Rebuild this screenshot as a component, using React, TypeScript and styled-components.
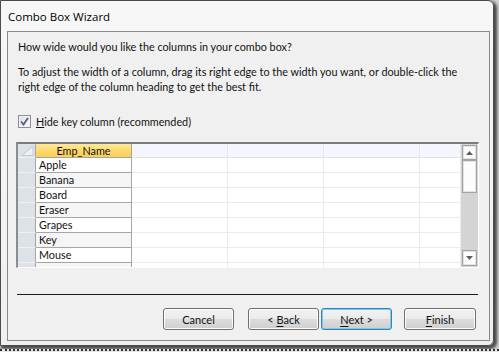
import React from "react";
import styled, { createGlobalStyle } from "styled-components";

const GlobalStyle = createGlobalStyle`
  html, body {
    margin: 0;
    padding: 0;
  }
  body {
    width: 499px;
    height: 352px;
    overflow: hidden;
    background: #cfcfcf;
    font-family: Lato, "Open Sans", sans-serif;
    font-size: 10.8px;
    color: #111;
  }
`;

const items = ["Apple", "Banana", "Board", "Eraser", "Grapes", "Key", "Mouse"];

const Screen = styled.div`
  width: 499px;
  height: 352px;
  display: flex;
  flex-direction: column;
`;

const Window = styled.div`
  width: 492px;
  height: 344px;
  border: 1px solid #4b4b4b;
  border-radius: 0 6px 6px 0;
  background: linear-gradient(to bottom, #f7f7f7 0%, #efefef 100%);
  box-shadow: 2px 2px 3px 1px rgba(0, 0, 0, 0.65);
  display: flex;
  flex-direction: column;
`;

const TitleBar = styled.div`
  height: 30px;
  display: flex;
  align-items: center;
  padding-left: 7px;
  font-family: "Open Sans", sans-serif;
  font-size: 11.5px;
  color: #000;
`;

const Client = styled.div`
  flex: 1;
  margin: 0 3px 4px 6px;
  border: 1px solid #8a8a8a;
  background: #f0f0f0;
  display: flex;
  flex-direction: column;
`;

const Prompt = styled.p`
  margin: ${(p: { top: number }) => p.top}px 0 0 10px;
  line-height: 15px;
  white-space: nowrap;
`;

const CheckRow = styled.label`
  margin: 20px 0 0 10px;
  height: 15px;
  display: flex;
  align-items: center;
  gap: 5px;
`;

const CheckBox = styled.span`
  width: 11px;
  height: 11px;
  border: 1px solid #8e8f8f;
  background: linear-gradient(135deg, #dcdcdc 0%, #fbfbfb 100%);
  box-shadow: inset 0 0 0 1px #f4f4f4;
  display: flex;
  align-items: center;
  justify-content: center;
`;

const Grid = styled.div`
  margin: 13px 0 0 8px;
  width: 460px;
  height: 123px;
  border-top: 2px solid #7c7c7c;
  border-left: 2px solid #8c8c8c;
  border-right: 1px solid #ffffff;
  border-bottom: 1px solid #ffffff;
  display: flex;
  background: #fff;
`;

const Sheet = styled.div`
  flex: 1;
  overflow: hidden;
  display: grid;
  grid-template-columns: 18px 96px 96px 96px 96px 1fr;
  grid-auto-rows: 15px;
  grid-template-rows: 14px;
`;

const Selector = styled.div`
  background: #dde1e8;
  border-bottom: 1px solid #eef0f4;
  border-right: 1px solid #a5a5a5;
`;

const NameHead = styled.div`
  background: linear-gradient(to bottom, #fde99c 0%, #fcd766 60%, #f9cf55 100%);
  border-right: 1px solid #a5a5a5;
  border-bottom: 1px solid #a5a5a5;
  display: flex;
  align-items: center;
  justify-content: center;
  line-height: 13px;
`;

const EmptyHead = styled.div`
  background: #f4f6fd;
  border-right: 1px solid #e6e8ef;
  border-bottom: 1px solid #e2e4ea;
`;

const NameCell = styled.div<{ alt: boolean }>`
  background: ${(p) => (p.alt ? "#f5f5f5" : "#ffffff")};
  border-right: 1px solid #a5a5a5;
  border-bottom: 1px solid #a5a5a5;
  padding-left: 3px;
  line-height: 14px;
  white-space: nowrap;
  overflow: hidden;
`;

const EmptyCell = styled.div`
  border-right: 1px solid #ebebeb;
  border-bottom: 1px solid #ebebeb;
`;

const ScrollBar = styled.div`
  width: 17px;
  background: #d4d4d4;
  display: flex;
  flex-direction: column;
  align-items: center;
  padding: 1px 0;
  box-sizing: border-box;
`;

const ScrollButton = styled.div<{ h: number }>`
  width: 15px;
  height: ${(p) => p.h}px;
  box-sizing: border-box;
  background: #fcfcfc;
  border: 1px solid #a3a3a3;
  box-shadow: inset 0 0 0 1px #e2e2e2;
  display: flex;
  align-items: center;
  justify-content: center;
`;

const Track = styled.div`
  flex: 1;
`;

const Separator = styled.div`
  margin: 26px 0 0 9px;
  width: 461px;
  height: 1px;
  background: #1c1c1c;
`;

const ButtonRow = styled.div`
  margin-top: 13px;
  padding-right: 13px;
  display: flex;
  justify-content: flex-end;
`;

const Button = styled.button<{ focused?: boolean; gap: number; w: number }>`
  width: ${(p) => p.w}px;
  height: 22px;
  margin-left: ${(p) => p.gap}px;
  padding: 0;
  font-family: inherit;
  font-size: 11px;
  color: #111;
  border-radius: 3px;
  border: 1px solid ${(p) => (p.focused ? "#3c7fb1" : "#707070")};
  background: linear-gradient(
    to bottom,
    #f2f2f2 0%,
    #ebebeb 50%,
    #dddddd 50%,
    #cfcfcf 100%
  );
  box-shadow: inset 0 0 0 1px ${(p) => (p.focused ? "#6fd0f5" : "#fbfbfb")};
  u {
    text-decoration-thickness: 1px;
    text-underline-offset: 2px;
  }
`;

const Backdrop = styled.div`
  flex: 1;
  margin-top: 3px;
  border-top: 2px dotted #2e2e2e;
  background: #e6e6e6;
`;

const Corner = () => (
  <svg width="18" height="13" viewBox="0 0 18 13">
    <polygon points="4,11.5 15,2 15,11.5" fill="#eef0f5" stroke="#c3c8d1" strokeWidth="1" />
  </svg>
);

const Arrow = ({ up }: { up: boolean }) => (
  <svg width="7" height="4" viewBox="0 0 7 4">
    <polygon points={up ? "0,4 3.5,0 7,4" : "0,0 3.5,4 7,0"} fill="#5e5e5e" />
  </svg>
);

const Check = () => (
  <svg width="9" height="9" viewBox="0 0 9 9">
    <path d="M1 4.5 L3.5 7.5 L8 1" fill="none" stroke="#4a5f97" strokeWidth="1.8" />
  </svg>
);

export default function App() {
  const rows = [...items, ""];
  return (
    <Screen>
      <GlobalStyle />
      <Window>
        <TitleBar>Combo Box Wizard</TitleBar>
        <Client>
          <Prompt top={7}>How wide would you like the columns in your combo box?</Prompt>
          <Prompt top={10}>
            To adjust the width of a column, drag its right edge to the width you want, or double-click the
            <br />
            right edge of the column heading to get the best fit.
          </Prompt>
          <CheckRow>
            <CheckBox>
              <Check />
            </CheckBox>
            <span>
              <u>H</u>ide key column (recommended)
            </span>
          </CheckRow>
          <Grid>
            <Sheet>
              <Selector>
                <Corner />
              </Selector>
              <NameHead>Emp_Name</NameHead>
              <EmptyHead />
              <EmptyHead />
              <EmptyHead />
              <EmptyHead />
              {rows.map((name, i) => (
                <React.Fragment key={i}>
                  <Selector />
                  <NameCell alt={i % 2 === 1}>{name}</NameCell>
                  <EmptyCell />
                  <EmptyCell />
                  <EmptyCell />
                  <EmptyCell />
                </React.Fragment>
              ))}
            </Sheet>
            <ScrollBar>
              <ScrollButton h={15}>
                <Arrow up />
              </ScrollButton>
              <ScrollButton h={33} />
              <Track />
              <ScrollButton h={16}>
                <Arrow up={false} />
              </ScrollButton>
            </ScrollBar>
          </Grid>
          <Separator />
          <ButtonRow>
            <Button gap={0} w={71}>
              Cancel
            </Button>
            <Button gap={14} w={71}>
              &lt; <u>B</u>ack
            </Button>
            <Button gap={2} w={71} focused>
              <u>N</u>ext &gt;
            </Button>
            <Button gap={12} w={72}>
              <u>F</u>inish
            </Button>
          </ButtonRow>
        </Client>
      </Window>
      <Backdrop />
    </Screen>
  );
}
